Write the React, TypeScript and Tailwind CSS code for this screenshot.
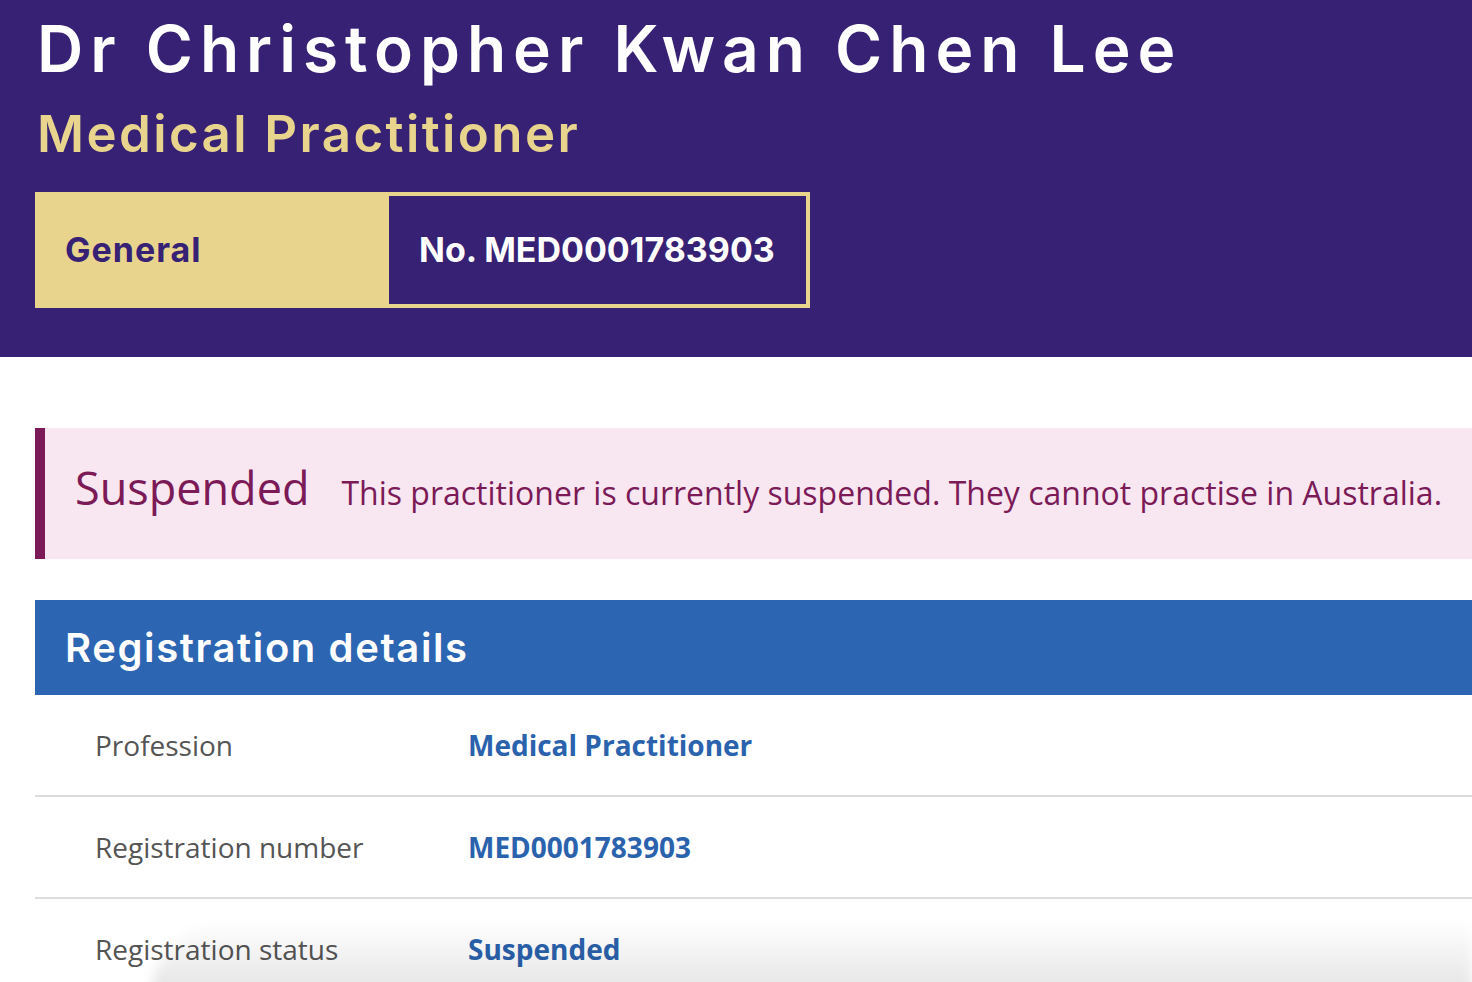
const rows = [
  { label: 'Profession', value: 'Medical Practitioner' },
  { label: 'Registration number', value: 'MED0001783903' },
  { label: 'Registration status', value: 'Suspended' },
]

export default function App() {
  return (
    <div className="relative min-h-[982px] overflow-hidden bg-white">
      {/* Practitioner header */}
      <header className="h-[357px] bg-[#362174] pl-[35px] pt-[17px] font-['Inter',sans-serif]">
        <h1 className="pl-[2px] text-[64px] font-semibold leading-[64px] tracking-[7px] text-white">
          Dr Christopher Kwan Chen Lee
        </h1>
        <p className="mt-[27px] pl-[2px] text-[51px] font-semibold leading-[51px] tracking-[2.4px] text-[#e9d48d]">
          Medical Practitioner
        </p>
        <div className="mt-[33px] flex h-[116px] w-[775px] bg-[#e9d48d] p-[4px]">
          <div className="flex w-[350px] items-center pl-[26px] text-[34px] font-bold leading-none tracking-[1px] text-[#362174]">
            General
          </div>
          <div className="flex flex-1 items-center bg-[#362174] pl-[30px] text-[34px] font-bold leading-none text-white">
            No. MED0001783903
          </div>
        </div>
      </header>

      <main className="pl-[35px] pt-[71px]">
        {/* Status notice */}
        <div className="flex h-[131px] items-center border-l-[10px] border-[#7b1a57] bg-[#f8e6f1] pb-[12px] pl-[30px] font-['Open_Sans',sans-serif] text-[#7b1a57]">
          <div className="flex items-baseline gap-[32px]">
            <span className="text-[45px] leading-none">Suspended</span>
            <span className="text-[32px] leading-none">
              This practitioner is currently suspended. They cannot practise in Australia.
            </span>
          </div>
        </div>

        {/* Registration details */}
        <section className="mt-[41px]">
          <h2 className="flex h-[95px] items-center bg-[#2c66b3] pl-[30px] font-['Inter',sans-serif] text-[40px] font-semibold leading-none tracking-[1.6px] text-white">
            Registration details
          </h2>
          <dl className="font-['Open_Sans',sans-serif]">
            {rows.map((row) => (
              <div
                key={row.label}
                className="grid h-[102px] grid-cols-[373px_1fr] items-center border-b-2 border-[#dddddd] pl-[60px]"
              >
                <dt className="text-[28px] text-[#555555]">{row.label}</dt>
                <dd className="text-[28px] font-bold text-[#2a62ad]">{row.value}</dd>
              </div>
            ))}
          </dl>
        </section>
      </main>

      <div className="pointer-events-none absolute bottom-0 left-[150px] right-0 h-[80px] rounded-tl-[120px] bg-gradient-to-b from-transparent to-black/12 blur-[6px]" />
      <div className="pointer-events-none absolute bottom-0 left-[220px] right-0 h-px bg-[#c4c4c4]" />
    </div>
  )
}
